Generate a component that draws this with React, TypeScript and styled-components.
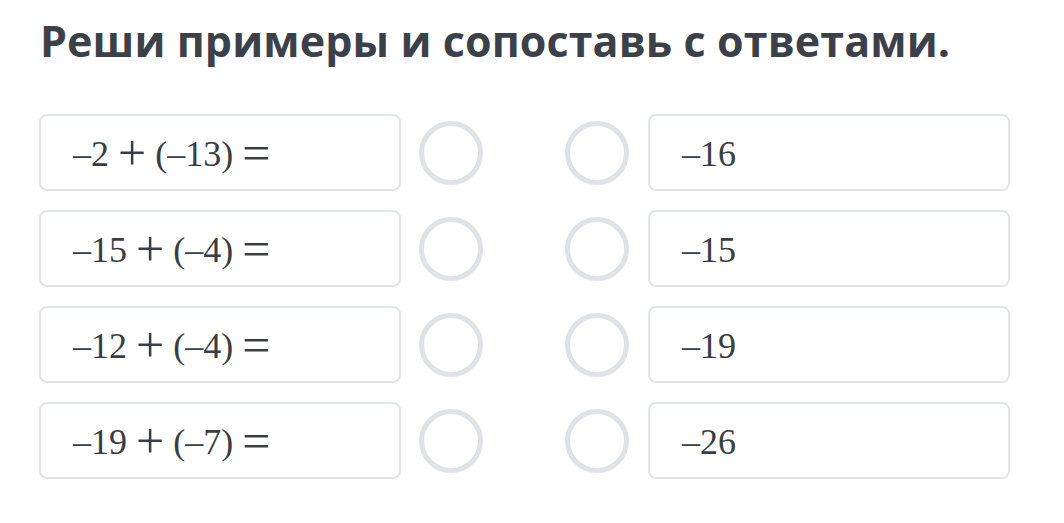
import React from 'react'
import styled, { createGlobalStyle } from 'styled-components'

const GlobalStyle = createGlobalStyle`
  html, body {
    margin: 0;
    padding: 0;
    background: #ffffff;
  }
`

const Page = styled.div`
  width: 1064px;
  height: 523px;
  box-sizing: border-box;
  padding: 12px 0 0 39px;
  background: #ffffff;
`

const Title = styled.h1`
  margin: 0 0 44px 1px;
  font-family: 'Open Sans', 'Noto Sans', sans-serif;
  font-weight: 700;
  font-size: 43px;
  line-height: 58px;
  color: #3c4149;
  letter-spacing: 0.1px;
`

const Board = styled.div`
  display: flex;
  flex-direction: column;
  gap: 19px;
  width: 971px;
`

const Row = styled.div`
  display: flex;
  align-items: center;
`

const Card = styled.div`
  box-sizing: border-box;
  flex: 0 0 362px;
  height: 77px;
  display: flex;
  align-items: center;
  padding-left: 32px;
  border: 2px solid #e3e6e9;
  border-radius: 8px;
  background: #ffffff;
`

const Dots = styled.div`
  flex: 1;
  display: flex;
  justify-content: space-between;
  padding: 0 19px 0 18px;
`

const Dot = styled.div`
  box-sizing: border-box;
  width: 64px;
  height: 64px;
  border-radius: 50%;
  border: 5px solid #dfe3e7;
`

const Math = styled.span`
  font-family: 'Liberation Serif', 'DejaVu Serif', serif;
  font-size: 36px;
  line-height: 40px;
  color: #3a3e44;
  white-space: nowrap;
  position: relative;
  top: 1px;
`

const Op = styled.span`
  display: inline-block;
  font-size: 50px;
  line-height: 0;
  margin: 0 9px;
  position: relative;
  top: 4px;
`

type Pair = { a: string; b: string; answer: string }

const rows: Pair[] = [
  { a: '–2', b: '(–13)', answer: '–16' },
  { a: '–15', b: '(–4)', answer: '–15' },
  { a: '–12', b: '(–4)', answer: '–19' },
  { a: '–19', b: '(–7)', answer: '–26' },
]

const Expression = ({ a, b }: { a: string; b: string }) => (
  <Math>
    {a}
    <Op>+</Op>
    {b}
    <Op>=</Op>
  </Math>
)

export default function App() {
  return (
    <Page>
      <GlobalStyle />
      <Title>Реши примеры и сопоставь с ответами.</Title>
      <Board>
        {rows.map((r) => (
          <Row key={r.a + r.b}>
            <Card>
              <Expression a={r.a} b={r.b} />
            </Card>
            <Dots>
              <Dot />
              <Dot />
            </Dots>
            <Card>
              <Math>{r.answer}</Math>
            </Card>
          </Row>
        ))}
      </Board>
    </Page>
  )
}
